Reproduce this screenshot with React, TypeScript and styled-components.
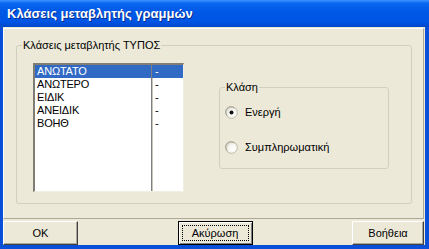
import React from 'react';
import styled, { createGlobalStyle, css } from 'styled-components';

const GlobalStyle = createGlobalStyle`
  html, body {
    margin: 0;
    padding: 0;
    background: #ECE9D8;
  }
  * {
    box-sizing: border-box;
  }
`;

const Window = styled.div`
  width: 429px;
  height: 249px;
  display: flex;
  flex-direction: column;
  background: #0A4FD8;
  font-family: "Liberation Sans", Arial, sans-serif;
  font-size: 11px;
  color: #000;
`;

const TitleBar = styled.div`
  height: 27px;
  display: flex;
  align-items: center;
  padding: 0 0 0 7px;
  background: linear-gradient(
    to bottom,
    #3D95FF 0%,
    #0A66F0 12%,
    #0058E6 45%,
    #0055E5 80%,
    #0047C8 100%
  );
  color: #fff;
  font-size: 13px;
  font-weight: bold;
  text-shadow: 1px 1px 0 #0A2C8C;
`;

const Body = styled.div`
  flex: 1;
  margin: 0 4px 4px 3px;
  background: #ECE9D8;
  display: flex;
  flex-direction: column;
`;

const Panel = styled.div`
  height: 191px;
  margin: 1px 1px 0 0;
  display: flex;
  padding: 10px 11px 14px 12px;
  border: 1px solid;
  border-color: #fff #ACA899 #ACA899 #fff;
`;

const GroupBox = styled.fieldset<{ $width?: number; $height?: number }>`
  margin: 0;
  padding: 0;
  border: 1px solid #D0D0BF;
  border-radius: 3px;
  min-width: 0;
  ${(p) => (p.$width ? css`width: ${p.$width}px; flex: none;` : css`flex: 1;`)}
  ${(p) => p.$height && css`height: ${p.$height}px;`}
`;

const Legend = styled.legend`
  margin-left: 5px;
  padding: 0 1px;
  line-height: 13px;
  font-size: 11px;
`;

const GroupContent = styled.div`
  display: flex;
  align-items: flex-start;
  padding: 11px 0 0 16px;
`;

const ListBox = styled.div`
  width: 151px;
  height: 129px;
  display: flex;
  background: #fff;
  border-style: solid;
  border-width: 2px 1px 1px 2px;
  border-color: #7F7D74 #F1EFE2 #F1EFE2 #7F7D74;
`;

const Column = styled.div<{ $width?: number }>`
  ${(p) => (p.$width ? css`width: ${p.$width}px;` : css`flex: 1;`)}
  ${(p) =>
    p.$width &&
    css`
      border-right: 1px solid #808080;
      box-shadow: 1px 0 0 #C8C6BC;
    `}
`;

const Cell = styled.div<{ $selected?: boolean }>`
  height: 13px;
  line-height: 13px;
  padding-left: 2px;
  white-space: nowrap;
  letter-spacing: -0.2px;
  ${(p) =>
    p.$selected &&
    css`
      background: #316AC5;
      color: #fff;
    `}
`;

const ValueCell = styled(Cell)`
  padding-left: 3px;
`;

const ClassGroup = styled.div`
  margin: 18px 0 0 35px;
  display: flex;
`;

const RadioList = styled.div`
  display: flex;
  flex-direction: column;
  gap: 22px;
  padding: 12px 0 0 5px;
`;

const RadioRow = styled.label`
  display: flex;
  align-items: center;
  gap: 7px;
  height: 13px;
  line-height: 13px;
`;

const ButtonRow = styled.div`
  margin-top: 2px;
  height: 24px;
  display: flex;
  justify-content: space-between;
  padding-right: 1px;
`;

const Button = styled.button<{ $width: number; $default?: boolean }>`
  width: ${(p) => p.$width}px;
  height: 24px;
  padding: 0;
  background: #ECE9D8;
  font-family: "Liberation Sans", Arial, sans-serif;
  font-size: 11px;
  color: #000;
  border-style: solid;
  border-width: 1px;
  border-color: #fff #404040 #404040 #fff;
  box-shadow: inset -1px -1px 0 #ACA899;
  ${(p) =>
    p.$default &&
    css`
      border-color: #000;
      box-shadow: inset 1px 1px 0 #fff, inset -1px -1px 0 #808080;
    `}
`;

const FocusRing = styled.span`
  display: flex;
  align-items: center;
  justify-content: center;
  margin: 0 3px;
  height: 16px;
  border: 1px dotted #000;
`;

const Radio = ({ checked }: { checked?: boolean }) => {
  const id = checked ? 'radio-on' : 'radio-off';
  return (
    <svg width="13" height="13" viewBox="0 0 13 13">
      <defs>
        <radialGradient id={id} cx="0.65" cy="0.65" r="0.7">
          <stop offset="0" stopColor="#FFFFFF" />
          <stop offset="0.6" stopColor="#F6F5F0" />
          <stop offset="1" stopColor="#D6D3C6" />
        </radialGradient>
      </defs>
      <circle cx="6.5" cy="6.5" r="5.8" fill={`url(#${id})`} stroke="#BDBAAE" strokeWidth="1" />
      <path d="M2.2 9.5 A5 5 0 0 1 9.5 2.2" fill="none" stroke="#A8A597" strokeWidth="1" />
      {checked && <circle cx="6.5" cy="6.5" r="2" fill="#111" />}
    </svg>
  );
};

const rows = ['ΑΝΩΤΑΤΟ', 'ΑΝΩΤΕΡΟ', 'ΕΙΔΙΚ', 'ΑΝΕΙΔΙΚ', 'ΒΟΗΘ'];

export default function App(): React.ReactElement {
  return (
    <>
      <GlobalStyle />
      <Window>
        <TitleBar>Κλάσεις μεταβλητής γραμμών</TitleBar>
        <Body>
          <Panel>
            <GroupBox>
              <Legend>Κλάσεις μεταβλητής ΤΥΠΟΣ</Legend>
              <GroupContent>
                <ListBox>
                  <Column $width={117}>
                    {rows.map((r, i) => (
                      <Cell key={r} $selected={i === 0}>{r}</Cell>
                    ))}
                  </Column>
                  <Column>
                    {rows.map((r, i) => (
                      <ValueCell key={r} $selected={i === 0}>-</ValueCell>
                    ))}
                  </Column>
                </ListBox>
                <ClassGroup>
                  <GroupBox $width={170} $height={88}>
                    <Legend>Κλάση</Legend>
                    <RadioList>
                      <RadioRow>
                        <Radio checked />
                        Ενεργή
                      </RadioRow>
                      <RadioRow>
                        <Radio />
                        Συμπληρωματική
                      </RadioRow>
                    </RadioList>
                  </GroupBox>
                </ClassGroup>
              </GroupContent>
            </GroupBox>
          </Panel>
          <ButtonRow>
            <Button $width={75}>OK</Button>
            <Button $width={75} $default>
              <FocusRing>Ακύρωση</FocusRing>
            </Button>
            <Button $width={72}>Βοήθεια</Button>
          </ButtonRow>
        </Body>
      </Window>
    </>
  );
}
